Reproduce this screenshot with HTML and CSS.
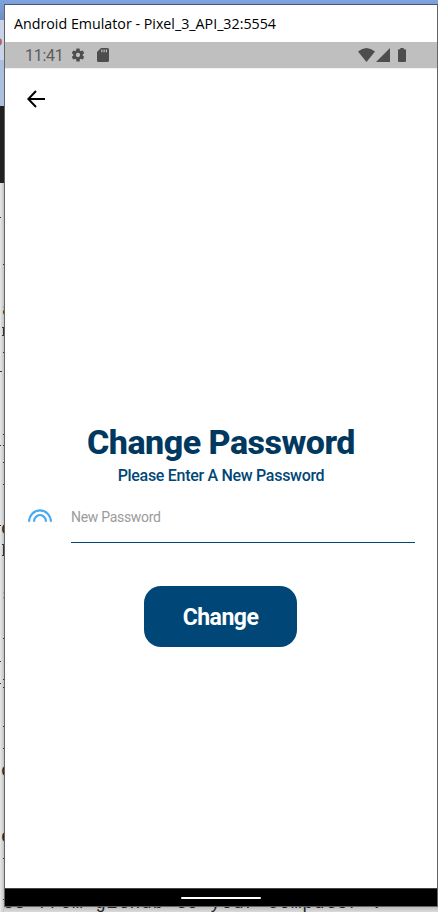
FILE: index.html
```html
<!DOCTYPE html>
<html lang="en">
<head>
<meta charset="utf-8">
<title>Change Password</title>
<link rel="stylesheet" href="styles.css">
</head>
<body>
<svg class="backdrop" width="438" height="912" viewBox="0 0 438 912" aria-hidden="true">
  <defs>
    <linearGradient id="sky" x1="0" x2="0" y1="0" y2="1"><stop offset="0" stop-color="#80a3dd"/><stop offset="1" stop-color="#6e8fc5"/></linearGradient>
    <linearGradient id="edge" x1="0" x2="1" y1="0" y2="0"><stop offset="0" stop-color="#e8e9e9"/><stop offset="1" stop-color="#b8baba"/></linearGradient>
    <linearGradient id="foot" x1="0" x2="0" y1="0" y2="1"><stop offset="0" stop-color="#b5b5b5"/><stop offset="1" stop-color="#dcdcdc"/></linearGradient>
  </defs>
  <rect width="438" height="20" fill="url(#sky)"/>
  <rect y="20" width="5" height="40" fill="#c8d3e8"/>
  <circle cx="-2" cy="42" r="4" fill="#b4665c"/>
  <rect y="60" width="5" height="46" fill="#adbfdf"/>
  <rect y="106" width="5" height="77" fill="#202020"/>
  <rect y="183" width="5" height="729" fill="url(#edge)"/>
  <rect x="4" y="906" width="434" height="6" fill="url(#foot)"/>
  <path class="serifs" d="M0 217.500h1M3 264.500h2M2 327.500h3M2 335.500h3M3 352.500h2M0 371.500h2M3 434.500h2M0 445.500h1M3 445.500h2M3 462.500h2M3 484.500h2M0 525.500h1M2 544.500h2M2 555.500h2M3 638.500h2M0 661.500h1M3 679.500h2M0 683.500h1M3 687.500h2M3 726.500h2M3 748.500h2M3 858.500h2M3 899.500h2M3.500 328v7M3.500 545v10"/>
  <g class="page-text">
    <text x="2" y="315">a</text>
    <text x="1" y="534">o</text>
    <text x="2" y="600">s</text>
    <text x="1" y="776">c</text>
    <text x="1" y="842">e</text>
    <text x="3" y="908" textLength="379">es from github to your computer .</text>
  </g>
</svg>
<main class="window">
  <header class="titlebar"><span>Android Emulator - Pixel_3_API_32:5554</span></header>
  <div class="statusbar">
    <span class="clock">11:41</span>
    <svg class="gear" width="16" height="16" viewBox="0 0 24 24"><path fill-rule="evenodd" d="M19.14 12.94c.04-.3.06-.61.06-.94s-.02-.64-.07-.94l2.03-1.58a.5.5 0 0 0 .12-.61l-1.92-3.32a.5.5 0 0 0-.59-.22l-2.39.96a7 7 0 0 0-1.62-.94l-.36-2.54a.5.5 0 0 0-.48-.41h-3.84a.5.5 0 0 0-.47.41l-.36 2.54c-.59.24-1.13.57-1.62.94l-2.39-.96a.5.5 0 0 0-.59.22L2.74 8.87a.5.5 0 0 0 .12.61l2.03 1.58a7 7 0 0 0-.02 1.88l-2.03 1.58a.5.5 0 0 0-.12.61l1.920 3.320c.12.22.37.29.59.22l2.390-.96c.5.38 1.030.7 1.620.94l.36 2.540c.05.24.24.41.48.41h3.840c.24 0 .44-.17.47-.41l.36-2.540a7 7 0 0 0 1.620-.94l2.390.96c.22.08.47 0 .59-.22l1.920-3.320a.5.5 0 0 0-.12-.61zM12 15.200a3.200 3.200 0 1 1 0-6.400 3.200 3.200 0 0 1 0 6.400z"/></svg>
    <svg class="card" width="12" height="14" viewBox="0 0 12 14"><path fill-rule="evenodd" d="M4 0h6.500Q12 0 12 1.500v11Q12 14 10.500 14h-9Q0 14 0 12.500V4zM4.200 1.500v2.700h1.200V1.500zm2.300 0v2.700h1.200V1.500zm2.300 0v2.700H10V1.500z"/></svg>
    <span class="spacer"></span>
    <svg class="wifi" width="17" height="14" viewBox="0 0 17 14"><path d="M0 3.500Q8.500-3.500 17 3.500L8.500 14z"/></svg>
    <svg class="signal" width="14" height="14" viewBox="0 0 14 14"><path d="M14 0v14H0z"/></svg>
    <svg class="battery" width="8" height="14" viewBox="0 0 8 14"><path d="M2.300 0h3.400v1.300H7q1 0 1 1V13q0 1-1 1H1q-1 0-1-1V2.300q0-1 1-1h1.300z"/></svg>
  </div>
  <section class="screen">
    <svg class="back" width="18" height="18" viewBox="0 0 18 18"><path d="M18 9H1.500M9 1L1.300 9 9 17"/></svg>
    <h1>Change Password</h1>
    <p class="hint">Please Enter A New Password</p>
    <div class="field">
      <svg width="24" height="13" viewBox="0 0 24 13"><path d="M1 12.800a11 11.500 0 0 1 22 0M6 12.800a6 6.800 0 0 1 12 0"/></svg>
      <div class="input">New Password</div>
    </div>
    <button class="change">Change</button>
  </section>
  <footer class="navbar"><span class="handle"></span></footer>
</main>
</body>
</html>
```
FILE: styles.css
```css
* { box-sizing: border-box; }
body { margin: 0; width: 438px; height: 912px; overflow: hidden; background: #ddd; font-family: Roboto, sans-serif; }
.backdrop { position: absolute; top: 0; left: 0; }
.page-text { font: 18px "Liberation Mono", monospace; fill: #222; }
.serifs { fill: none; stroke: #333; stroke-width: 1; }
.window { position: relative; width: 434px; height: 903px; margin: 4px 0 0 4px; display: flex; flex-direction: column; background: #fff; border: 1px solid #626467; border-top-color: #42587c; }
.titlebar { height: 37px; flex: none; padding-left: 9px; font: 15px/37px "Open Sans", sans-serif; color: #000; white-space: nowrap; }
.titlebar span { display: inline-block; transform-origin: 0 50%; transform: scaleX(0.95); }
.statusbar { height: 27px; flex: none; display: flex; align-items: center; padding: 0 31px 0 20px; background: #bfbfbf; border-bottom: 1px solid #efefef; fill: #4d4d4d; }
.clock { width: 45px; padding-top: 1px; font-size: 16px; color: #5c5c5c; letter-spacing: -0.3px; }
.gear { margin-right: 11px; }
.spacer { flex: 1; }
.signal { margin: 0 8px 0 1px; }
.screen { flex: 1; display: flex; flex-direction: column; align-items: center; }
.back { align-self: flex-start; margin: 21px 0 0 22px; flex: none; fill: none; stroke: #000; stroke-width: 2; }
h1 { margin: 314px 0 0; font-size: 34px; line-height: 40px; font-weight: 800; letter-spacing: -0.5px; color: #003860; white-space: nowrap; }
.hint { margin: 4px 0 0; font-size: 16px; line-height: 20px; font-weight: 500; letter-spacing: -0.3px; color: #004777; }
.field { align-self: stretch; display: flex; margin: 23px 22px 0 23px; }
.field svg { flex: none; margin-right: 19px; fill: none; stroke: #48aaf0; stroke-width: 2.2; }
.input { flex: 1; height: 34px; font-size: 14px; line-height: 17px; letter-spacing: -0.3px; color: #9b9b9b; border-bottom: 1px solid #004777; }
.change { width: 153px; height: 61px; margin: 43px 1px 0 0; padding: 2px 0 0; border: 0; border-radius: 17px; background: #004777; color: #fff; font: 700 23px Roboto, sans-serif; letter-spacing: -0.5px; }
.navbar { height: 18px; flex: none; display: flex; align-items: center; justify-content: center; background: #000; border-top: 1px solid #444; }
.handle { width: 80px; height: 2px; background: #fff; border-radius: 1px; }
```
